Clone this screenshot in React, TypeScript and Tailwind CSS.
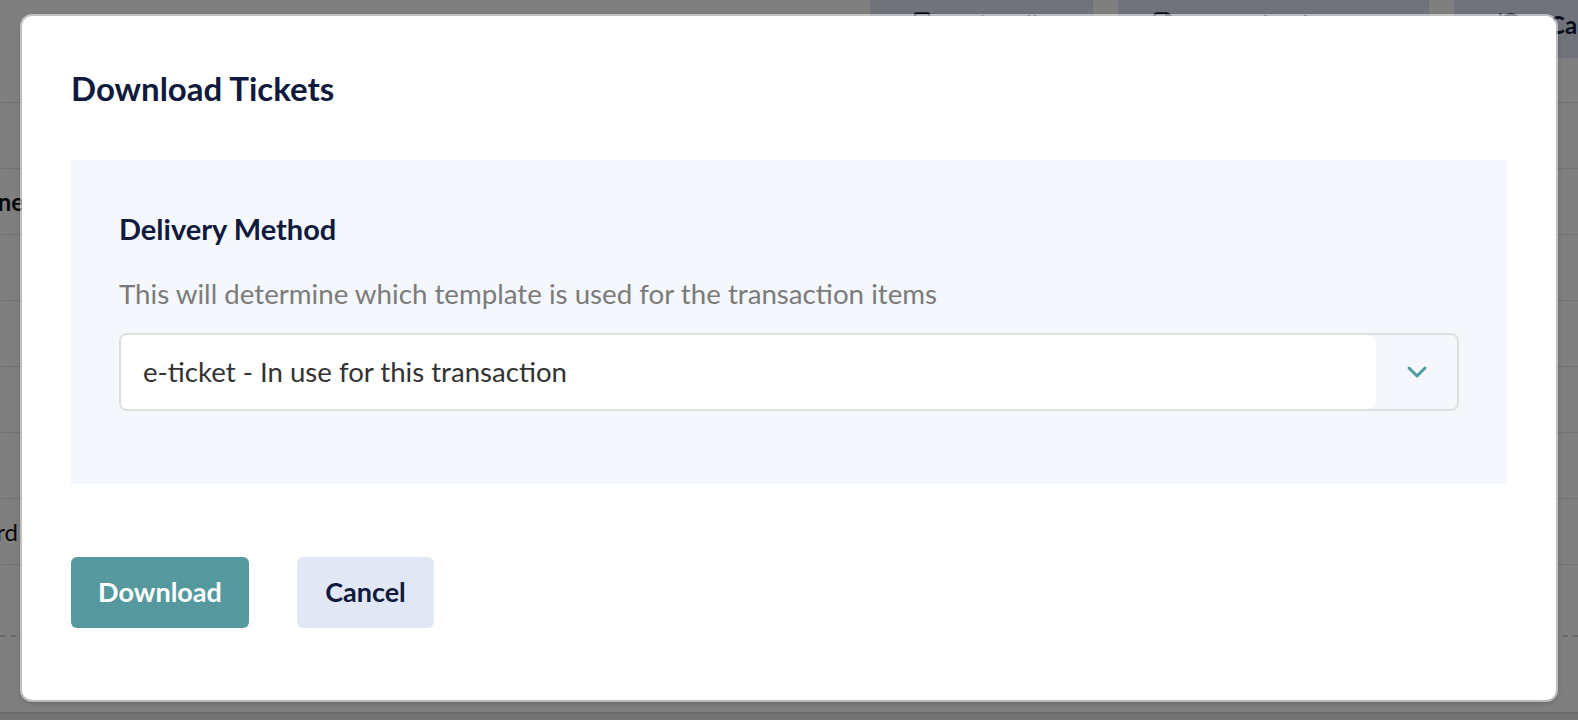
import { ChevronDown, Printer, FileText, RotateCcw } from 'lucide-react'

// Background page rows (only their edges show around the modal)
const rows = [
  { label: '', bold: false, end: 'w-[24px]' },
  { label: 'Phone', bold: true, end: 'w-[24px]' },
  { label: '', bold: false, end: 'w-[24px]' },
  { label: '', bold: false, end: 'w-[24px]' },
  { label: '', bold: false, end: 'w-[24px]' },
  { label: '', bold: false, end: 'w-[24px]' },
  { label: 'Card', bold: false, end: 'w-[18px]' },
]

function PageBehind() {
  return (
    <div className="flex h-full w-full flex-col bg-white">
      <div className="flex h-[103px] shrink-0 items-start gap-[25px] border-b border-[#e2e2e2] pl-[870px]">
        <button className="-mt-[8px] flex h-[66px] w-[223px] shrink-0 items-center gap-5 rounded-md bg-[#e1e7f5] pl-[38px] text-[24px] font-bold text-[#101a3c]">
          <Printer className="h-7 w-7" />
          Print all
        </button>
        <button className="-mt-[8px] flex h-[66px] w-[311px] shrink-0 items-center gap-5 rounded-md bg-[#e1e7f5] pl-[32px] text-[24px] font-bold text-[#101a3c]">
          <FileText className="h-7 w-7" />
          Download PDF
        </button>
        <button className="-mt-[8px] flex h-[66px] w-[220px] shrink-0 items-center gap-6 rounded-md bg-[#e1e7f5] pl-[43px] text-[24px] font-bold text-[#101a3c]">
          <RotateCcw className="h-7 w-7" />
          Cancel
        </button>
      </div>
      {rows.map((r, i) => (
        <div key={i} className="flex h-[66px] shrink-0 items-center border-b border-[#e2e2e2]">
          <div className={`flex justify-end ${r.end}`}>
            <span className={`whitespace-nowrap text-[24px] text-[#111] ${r.bold ? 'font-bold' : ''}`}>{r.label}</span>
          </div>
        </div>
      ))}
      <div className="h-[72px] shrink-0 border-b-2 border-dashed border-[#d0d0d0]" />
      <div className="flex-1" />
      <div className="h-[8px] shrink-0 border-t-2 border-[#d4d4d4] bg-[#e8e8e8]" />
    </div>
  )
}

export default function App() {
  return (
    <div className="relative h-[720px] w-[1578px] overflow-hidden font-['Lato',sans-serif]">
      <PageBehind />
      <div className="absolute inset-0 bg-black/50" />

      <div className="absolute left-[22px] top-[16px] flex h-[684px] w-[1534px] flex-col rounded-[10px] bg-white px-[49px] pt-[52px] shadow-[0_0_0_2px_rgba(255,255,255,0.55),0_2px_6px_rgba(0,0,0,0.3)]">
        <h2 className="text-[33px] font-bold leading-[40px] text-[#101a3c]">Download Tickets</h2>

        <div className="mt-[52px] bg-[#f4f7fc] px-[48px] pb-[73px] pt-[51px]">
          <h3 className="text-[29px] font-bold leading-[36px] text-[#101a3c]">Delivery Method</h3>
          <p className="mt-[30px] text-[27.7px] leading-[34px] text-[#7b7b7b]">
            This will determine which template is used for the transaction items
          </p>
          <div className="mt-[22px] flex h-[78px] overflow-hidden rounded-[8px] border-2 border-[#dedede]">
            <div className="flex flex-1 items-center rounded-r-[8px] bg-white pl-[22px] text-[27.6px] text-[#333]">
              e-ticket - In use for this transaction
            </div>
            <div className="flex w-[81px] items-center justify-center">
              <ChevronDown className="h-[32px] w-[32px] text-[#4f9a9f]" strokeWidth={2.2} />
            </div>
          </div>
        </div>

        <div className="mt-[73px] flex gap-[48px]">
          <button className="h-[71px] w-[178px] rounded-[6px] bg-[#55999f] text-[27px] font-bold text-white">
            Download
          </button>
          <button className="h-[71px] w-[137px] rounded-[6px] bg-[#e1e7f5] text-[27px] font-bold text-[#101a3c]">
            Cancel
          </button>
        </div>
      </div>
    </div>
  )
}
